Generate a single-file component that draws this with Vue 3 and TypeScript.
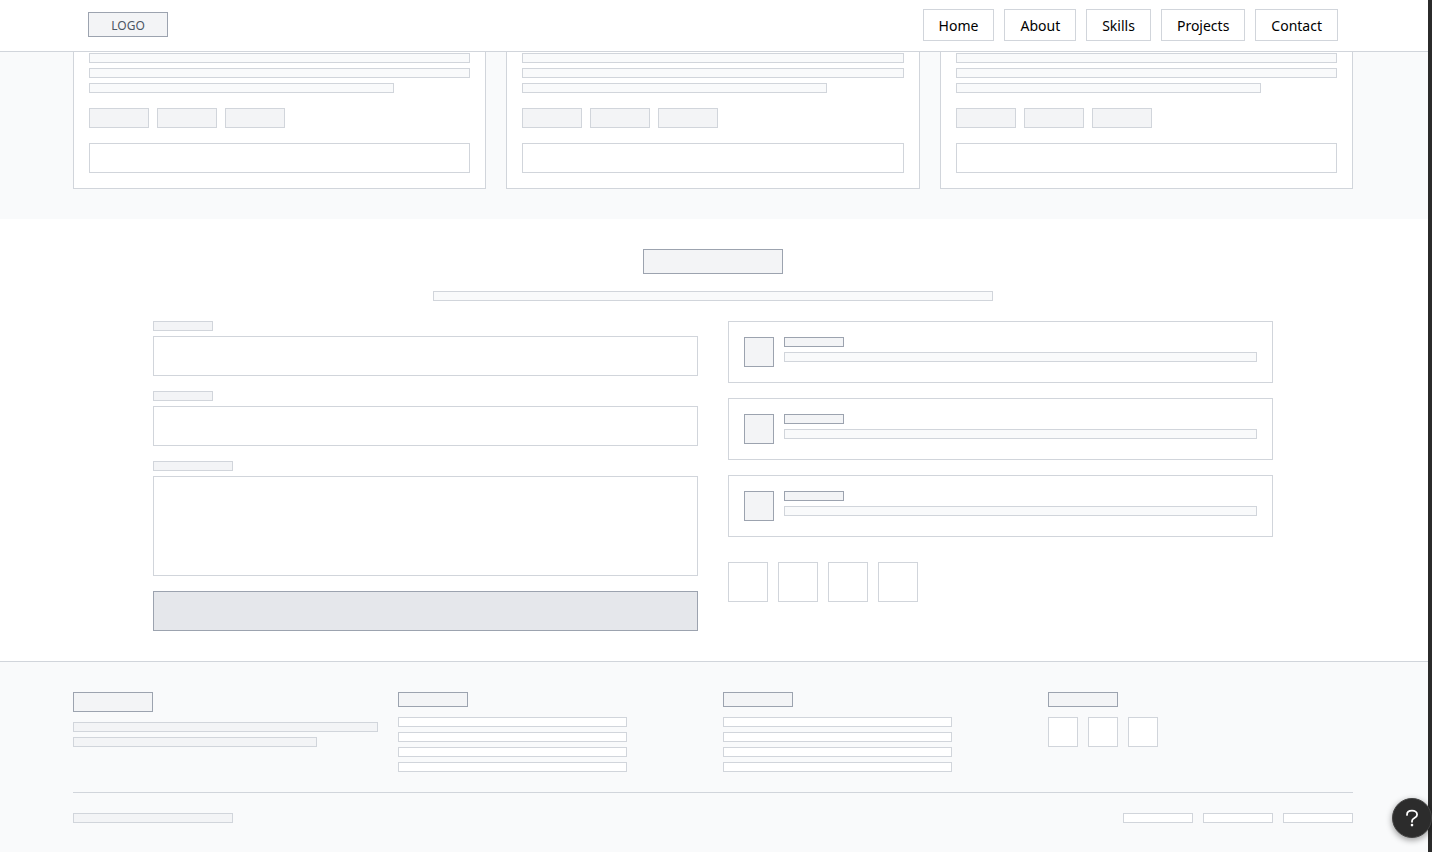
<script setup lang="ts">
interface NavItem {
  label: string
  href: string
}

interface Field {
  id: string
  name: string
  wide?: boolean
  multiline?: boolean
}

const navItems: NavItem[] = [
  { label: 'Home', href: '#home' },
  { label: 'About', href: '#about' },
  { label: 'Skills', href: '#skills' },
  { label: 'Projects', href: '#projects' },
  { label: 'Contact', href: '#contact' },
]

const fields: Field[] = [
  { id: 'name', name: 'Name' },
  { id: 'email', name: 'Email' },
  { id: 'message', name: 'Message', wide: true, multiline: true },
]

const contacts: string[] = ['email', 'phone', 'location']
const socials: string[] = ['GitHub', 'LinkedIn', 'Twitter', 'Dribbble']
const footerLists: string[] = ['Links', 'Services']
const legal: string[] = ['Privacy', 'Terms', 'Cookies']
</script>

<template>
  <div class="page">
    <header class="header">
      <div class="container header-row">
        <a class="logo" href="#home">LOGO</a>
        <nav class="nav" aria-label="Main">
          <a v-for="item in navItems" :key="item.label" class="nav-link" :href="item.href">{{ item.label }}</a>
        </nav>
      </div>
    </header>

    <section id="projects" class="projects">
      <div class="container project-grid">
        <article v-for="card in 3" :key="card" class="card">
          <div class="lines">
            <div class="bar pale"></div>
            <div class="bar pale"></div>
            <div class="bar pale short"></div>
          </div>
          <div class="tags">
            <span v-for="tag in 3" :key="tag" class="tag"></span>
          </div>
          <button class="card-button" type="button" :aria-label="`View project ${card}`"></button>
        </article>
      </div>
    </section>

    <section id="contact" class="contact">
      <div class="contact-inner">
        <div class="contact-title"></div>
        <div class="bar pale contact-subtitle"></div>
        <div class="contact-grid">
          <form class="form" @submit.prevent>
            <div v-for="field in fields" :key="field.id" class="field">
              <label class="bar label" :class="{ wide: field.wide }" :for="field.id" :aria-label="field.name"></label>
              <textarea v-if="field.multiline" :id="field.id" class="control area" :aria-label="field.name"></textarea>
              <input v-else :id="field.id" class="control" type="text" :aria-label="field.name" />
            </div>
            <button class="submit" type="submit" aria-label="Send message"></button>
          </form>

          <div class="info">
            <div class="info-list">
              <div v-for="contact in contacts" :key="contact" class="info-card">
                <div class="info-icon"></div>
                <div class="info-text">
                  <div class="bar info-name"></div>
                  <div class="bar pale"></div>
                </div>
              </div>
            </div>
            <div class="socials">
              <a v-for="social in socials" :key="social" class="social" href="#contact" :aria-label="social"></a>
            </div>
          </div>
        </div>
      </div>
    </section>

    <footer class="footer">
      <div class="container">
        <div class="footer-grid">
          <div>
            <div class="footer-logo"></div>
            <div class="lines">
              <div class="bar"></div>
              <div class="bar short"></div>
            </div>
          </div>
          <div v-for="list in footerLists" :key="list">
            <div class="footer-title"></div>
            <div class="lines">
              <a v-for="n in 4" :key="n" class="bar white footer-link" href="#home" :aria-label="`${list} ${n}`"></a>
            </div>
          </div>
          <div>
            <div class="footer-title"></div>
            <div class="footer-socials">
              <a v-for="n in 3" :key="n" class="social small" href="#home" :aria-label="socials[n - 1]"></a>
            </div>
          </div>
        </div>
        <div class="footer-bottom">
          <div class="bar copyright"></div>
          <div class="legal">
            <a v-for="item in legal" :key="item" class="bar white legal-link" href="#home" :aria-label="item"></a>
          </div>
        </div>
      </div>
    </footer>

    <button class="help" type="button" aria-label="Help">
      <svg width="20" height="20" viewBox="0 0 20 20" fill="none" aria-hidden="true">
        <path d="M5 6.9C5 4.3 7.1 2.7 10 2.7s5.1 1.6 5.1 4c0 3.6-5.1 3.1-5.1 6.3v.8" stroke="#fff" stroke-width="1.8" stroke-linecap="round" />
        <circle cx="10" cy="17.1" r="1.3" fill="#fff" />
      </svg>
    </button>
  </div>
</template>

<style>
body {
  margin: 0;
  background: #f9fafb;
}
</style>

<style scoped>
.page,
.page * {
  box-sizing: border-box;
}

.page {
  display: flex;
  flex-direction: column;
  min-height: 100vh;
  border-right: 4px solid #2b2b2b;
  background: #fff;
  font-family: "Noto Sans", "Open Sans", sans-serif;
}

.header,
.projects,
.contact,
.footer {
  padding-right: 2px;
}

.container {
  max-width: 1280px;
  margin: 0 auto;
}

.header {
  position: sticky;
  top: 0;
  z-index: 1;
  border-bottom: 1px solid #d1d5db;
  background: #fff;
}

.header-row {
  display: flex;
  align-items: center;
  justify-content: space-between;
  padding: 9px 15px 10px;
}

.logo {
  width: 80px;
  height: 25px;
  margin-bottom: 1px;
  border: 1px solid #9ca3af;
  background: #f3f4f6;
  color: #4b5563;
  font-size: 12px;
  line-height: 25px;
  text-align: center;
  text-decoration: none;
}

.nav {
  display: flex;
  gap: 10px;
}

.nav-link {
  padding: 6px 15px 4px;
  border: 1px solid #d1d5db;
  background: #fff;
  color: #000;
  font-size: 14px;
  line-height: 20px;
  text-decoration: none;
}

.bar {
  display: block;
  height: 10px;
  border: 1px solid #d1d5db;
  background: #f3f4f6;
}

.pale {
  background: #f9fafb;
}

.white {
  background: #fff;
}

.short {
  width: 80%;
}

.lines {
  display: flex;
  flex-direction: column;
  gap: 5px;
}

.projects {
  padding-bottom: 30px;
  background: #f9fafb;
}

.project-grid {
  display: grid;
  grid-template-columns: repeat(3, 1fr);
  gap: 20px;
}

.card {
  padding: 1px 15px 15px;
  border: 1px solid #d1d5db;
  border-top: 0;
  background: #fff;
}

.tags {
  display: flex;
  gap: 8px;
  margin: 15px 0;
}

.tag {
  width: 60px;
  height: 20px;
  border: 1px solid #d1d5db;
  background: #f3f4f6;
}

.card-button {
  display: block;
  width: 100%;
  height: 30px;
  padding: 0;
  border: 1px solid #d1d5db;
  border-radius: 0;
  background: #fff;
}

.contact {
  padding-top: 30px;
  padding-bottom: 30px;
}

.contact-inner {
  max-width: 1120px;
  margin: 0 auto;
}

.contact-title {
  width: 140px;
  height: 25px;
  margin: 0 auto 17px;
  border: 1px solid #9ca3af;
  background: #f3f4f6;
}

.contact-subtitle {
  width: 50%;
  margin: 0 auto 20px;
}

.contact-grid {
  display: grid;
  grid-template-columns: 1fr 1fr;
  gap: 30px;
}

.form {
  display: flex;
  flex-direction: column;
  gap: 15px;
}

.label {
  width: 60px;
  margin-bottom: 5px;
}

.label.wide {
  width: 80px;
}

.control {
  display: block;
  width: 100%;
  height: 40px;
  padding: 8px;
  border: 1px solid #d1d5db;
  border-radius: 0;
  background: #fff;
  font: inherit;
  font-size: 14px;
}

.area {
  height: 100px;
  resize: none;
}

.submit {
  height: 40px;
  padding: 0;
  border: 1px solid #9ca3af;
  border-radius: 0;
  background: #e5e7eb;
}

.info-list {
  display: flex;
  flex-direction: column;
  gap: 15px;
}

.info-card {
  display: flex;
  gap: 10px;
  padding: 15px;
  border: 1px solid #d1d5db;
}

.info-icon {
  width: 30px;
  height: 30px;
  border: 1px solid #9ca3af;
  background: #f3f4f6;
}

.info-text {
  flex: 1;
}

.info-name {
  width: 60px;
  margin-bottom: 5px;
  border-color: #9ca3af;
}

.socials {
  display: flex;
  gap: 10px;
  margin-top: 25px;
}

.social {
  width: 40px;
  height: 40px;
  border: 1px solid #d1d5db;
  background: #fff;
}

.social.small {
  width: 30px;
  height: 30px;
}

.footer {
  flex: 1;
  padding-top: 30px;
  padding-bottom: 20px;
  border-top: 1px solid #d1d5db;
  background: #f9fafb;
}

.footer-grid {
  display: grid;
  grid-template-columns: repeat(4, 1fr);
  gap: 20px;
}

.footer-logo,
.footer-title {
  width: 70px;
  height: 15px;
  margin-bottom: 10px;
  border: 1px solid #9ca3af;
  background: #f3f4f6;
}

.footer-logo {
  width: 80px;
  height: 20px;
}

.footer-link {
  width: 75%;
}

.footer-socials {
  display: flex;
  gap: 10px;
}

.footer-bottom {
  display: flex;
  justify-content: space-between;
  margin-top: 20px;
  padding-top: 20px;
  border-top: 1px solid #d1d5db;
}

.copyright {
  width: 160px;
}

.legal {
  display: flex;
  gap: 10px;
}

.legal-link {
  width: 70px;
}

.help {
  position: fixed;
  right: 0;
  bottom: 14px;
  z-index: 2;
  display: flex;
  align-items: center;
  justify-content: center;
  width: 40px;
  height: 40px;
  padding: 0;
  border: 1px solid #434343;
  border-radius: 50%;
  background: #2c2c2c;
  box-shadow: 0 2px 6px rgba(0, 0, 0, 0.4);
}
</style>
